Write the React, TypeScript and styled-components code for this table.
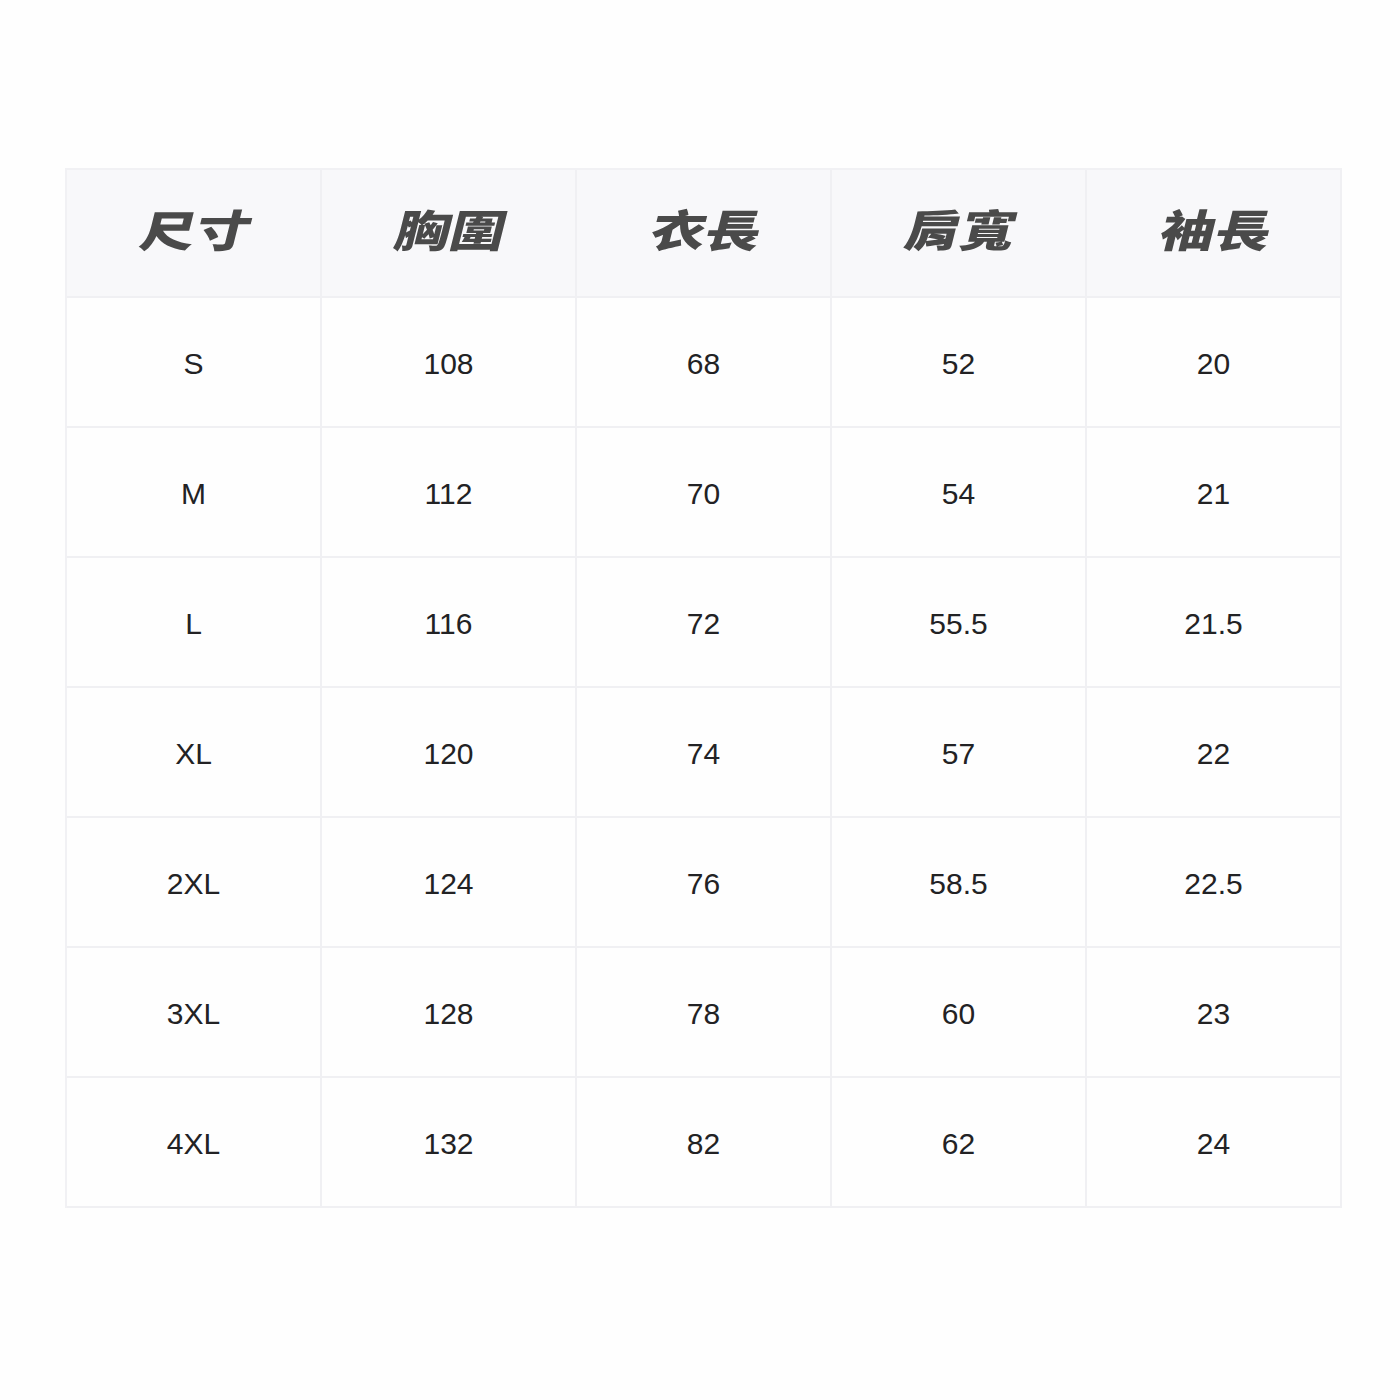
import styled, { createGlobalStyle } from "styled-components";

const GlobalStyle = createGlobalStyle`
  html, body {
    margin: 0;
    padding: 0;
    background: #fefefe;
  }
`;

const headers = ["尺寸", "胸圍", "衣長", "肩寬", "袖長"];

const rows = [
  ["S", "108", "68", "52", "20"],
  ["M", "112", "70", "54", "21"],
  ["L", "116", "72", "55.5", "21.5"],
  ["XL", "120", "74", "57", "22"],
  ["2XL", "124", "76", "58.5", "22.5"],
  ["3XL", "128", "78", "60", "23"],
  ["4XL", "132", "82", "62", "24"],
];

const App = () => {
  return (
    <Page>
      <GlobalStyle />
      <Table>
        <HeaderRow>
          {headers.map((h) => (
            <HeadCell key={h}>
              <HeadText>{h}</HeadText>
            </HeadCell>
          ))}
        </HeaderRow>
        {rows.map((r) => (
          <BodyRow key={r[0]}>
            {r.map((v, i) => (
              <Cell key={i}>{v}</Cell>
            ))}
          </BodyRow>
        ))}
      </Table>
    </Page>
  );
};

export default App;

const Page = styled.div`
  width: 1400px;
  height: 1400px;
  padding: 168px 0 0 65px;
  box-sizing: border-box;
`;

const Table = styled.div`
  width: 1277px;
  border-top: 2px solid #f1f1f4;
  border-left: 2px solid #f1f1f4;
  box-sizing: border-box;
`;

const HeaderRow = styled.div`
  display: grid;
  grid-template-columns: repeat(5, 1fr);
  height: 128px;
  background: #f8f8fa;
`;

const BodyRow = styled.div`
  display: grid;
  grid-template-columns: repeat(5, 1fr);
  height: 130px;
`;

const HeadCell = styled.div`
  display: flex;
  align-items: center;
  justify-content: center;
  padding-left: 6px;
  padding-bottom: 10px;
  border-right: 2px solid #f0f0f3;
  border-bottom: 2px solid #f0f0f3;
`;

const HeadText = styled.span`
  display: inline-block;
  font-family: "Noto Sans CJK TC", "Noto Sans CJK SC", sans-serif;
  font-weight: 900;
  font-size: 50px;
  line-height: 1;
  color: #4a4a4a;
  transform: skewX(-14deg) scale(1.1, 0.88);
`;

const Cell = styled.div`
  display: flex;
  align-items: center;
  justify-content: center;
  padding-top: 3px;
  border-right: 2px solid #f0f0f3;
  border-bottom: 2px solid #f0f0f3;
  font-family: "Liberation Sans", Arial, sans-serif;
  font-size: 30px;
  color: #222224;
`;
